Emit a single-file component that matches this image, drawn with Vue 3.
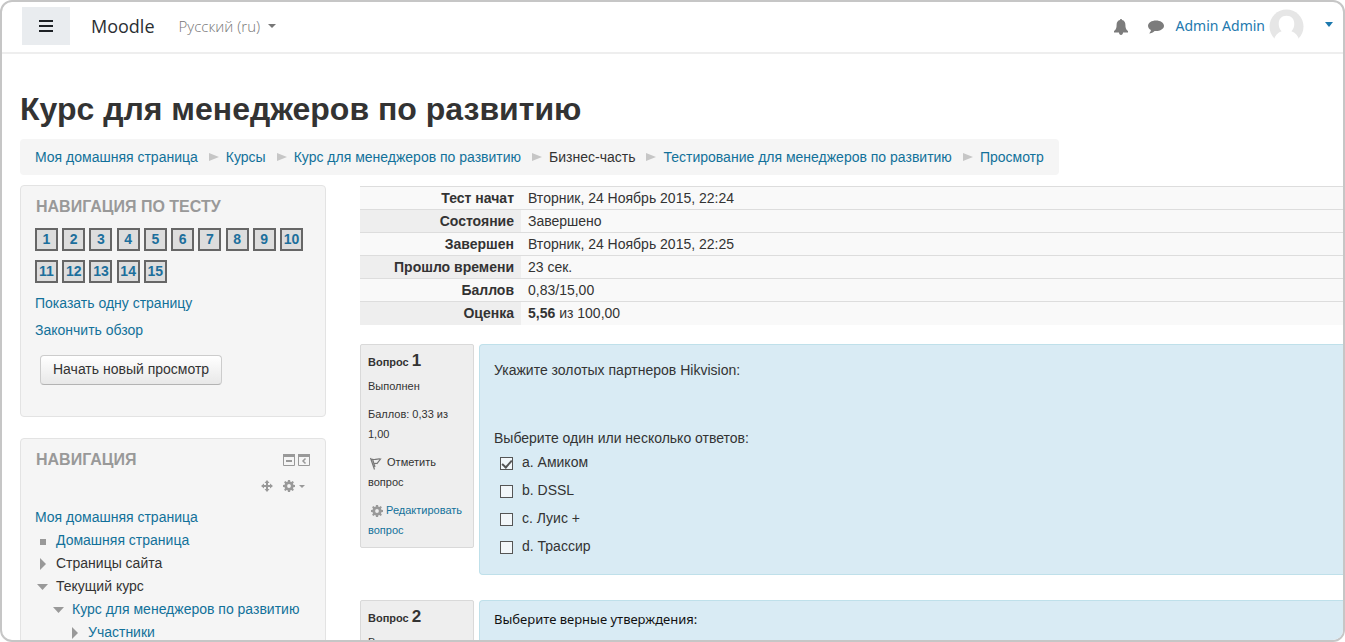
<script setup>
import { ref } from 'vue'

const crumbs = [
  { text: 'Моя домашняя страница', link: true },
  { text: 'Курсы', link: true },
  { text: 'Курс для менеджеров по развитию', link: true },
  { text: 'Бизнес-часть', link: false },
  { text: 'Тестирование для менеджеров по развитию', link: true },
  { text: 'Просмотр', link: true },
]

const summary = [
  { name: 'Тест начат', value: 'Вторник, 24 Ноябрь 2015, 22:24' },
  { name: 'Состояние', value: 'Завершено' },
  { name: 'Завершен', value: 'Вторник, 24 Ноябрь 2015, 22:25' },
  { name: 'Прошло времени', value: '23 сек.' },
  { name: 'Баллов', value: '0,83/15,00' },
  { name: 'Оценка', strong: '5,56', value: ' из 100,00' },
]

const tree = [
  { text: 'Домашняя страница', kind: 'leaf', level: 'l1', link: true },
  { text: 'Страницы сайта', kind: 'closed', level: 'l1', link: false },
  { text: 'Текущий курс', kind: 'open', level: 'l1', link: false },
  { text: 'Курс для менеджеров по развитию', kind: 'open', level: 'l2', link: true },
  { text: 'Участники', kind: 'closed', level: 'l3', link: true },
]

const answers = ref([
  { text: 'a. Амиком', checked: true },
  { text: 'b. DSSL', checked: false },
  { text: 'c. Луис +', checked: false },
  { text: 'd. Трассир', checked: false },
])

const gear =
  'M5.8 0h2.4l.4 1.9 1.1.5L11.300 1.300 12.700 2.700 11.600 4.300l.5 1.100 1.900.4v2.400l-1.900.4-.5 1.100 1.100 1.600-1.400 1.400-1.600-1.100-1.100.5-.4 1.900H5.800l-.4-1.900-1.100-.5-1.600 1.100-1.400-1.400 1.100-1.600-.5-1.100L0 8.200V5.800l1.900-.4.500-1.100L1.300 2.700l1.400-1.400 1.600 1.100 1.100-.5zM7 4.800a2.200 2.200 0 1 0 0 4.400 2.200 2.200 0 0 0 0-4.400z'
</script>

<template>
  <div class="frame">
    <header class="topbar">
      <button class="menu" type="button" aria-label="Меню">
        <svg width="14" height="12" viewBox="0 0 14 12"><path d="M0 1h14M0 6h14M0 11h14" stroke="#1d2125" stroke-width="2" /></svg>
      </button>
      <a class="brand" href="#">Moodle</a>
      <button class="lang" type="button">Русский (ru)
        <svg width="8" height="4" viewBox="0 0 8 4"><path d="M0 0h8L4 4z" fill="#777" /></svg>
      </button>
      <div class="user">
        <button class="plain bell" type="button" aria-label="Уведомления">
          <svg width="14" height="16" viewBox="0 0 14 16"><path d="M7 0c.6 0 1 .4 1 1 2.300.5 3.400 2.300 3.400 4.700 0 3.300.6 4.800 2.600 6.300v1.500H9C9 15 8.200 16 7 16s-2-1-2-2.500H0V12c2-1.500 2.600-3 2.600-6.300C2.600 3.300 3.700 1.500 6 1c0-.6.4-1 1-1z" fill="#7c7c7c" /></svg>
        </button>
        <button class="plain chat" type="button" aria-label="Сообщения">
          <svg width="16" height="14" viewBox="0 0 17 14"><path d="M8.500 0C13 0 17 2.300 17 5.700s-4 5.600-8.500 5.600l-1.500-.1C5.500 12.700 3.500 13.700 1.300 13.800c1-1 1.700-2.200 1.800-3.500C1.200 9.200 0 7.600 0 5.700 0 2.300 4 0 8.500 0z" fill="#7c7c7c" /></svg>
        </button>
        <a class="username" href="#">Admin Admin</a>
        <svg class="avatar" width="35" height="35" viewBox="0 0 36 36">
          <circle cx="18" cy="18" r="17.500" fill="#e6e6e6" />
          <path d="M18 7c5 0 8 3 8 8.500 0 3-1 5.500-3 7.500 4 1.500 7 4.500 8 9v4H5v-4c1-4.500 4-7.500 8-9-2-2-3-4.500-3-7.500C10 10 13 7 18 7z" fill="#fff" />
        </svg>
        <button class="plain caret" type="button" aria-label="Меню пользователя">
          <svg width="8" height="5" viewBox="0 0 8 5"><path d="M0 0h8L4 5z" fill="#1c79ae" /></svg>
        </button>
      </div>
    </header>

    <h1>Курс для менеджеров по развитию</h1>

    <nav class="crumbs" aria-label="Путь">
      <template v-for="(c, i) in crumbs" :key="c.text">
        <svg v-if="i" width="10" height="10" viewBox="0 0 10 10"><path d="M0 1l10 4-10 4z" fill="#c6c6c6" /></svg>
        <a v-if="c.link" href="#">{{ c.text }}</a>
        <span v-else>{{ c.text }}</span>
      </template>
    </nav>

    <div class="columns">
      <aside>
        <section class="block quiznav">
          <h2>Навигация по тесту</h2>
          <div class="pages">
            <a v-for="n in 15" :key="n" href="#">{{ n }}</a>
          </div>
          <a class="line" href="#">Показать одну страницу</a>
          <a class="line" href="#">Закончить обзор</a>
          <button class="restart" type="button">Начать новый просмотр</button>
        </section>

        <section class="block">
          <div class="blockhead">
            <h2>Навигация</h2>
            <button class="plain" type="button" aria-label="Свернуть">
              <svg width="12" height="12" viewBox="0 0 12 12"><path d="M.5 1h11v10.500H.5z" fill="none" stroke="#999" /><path d="M0 0h12v3H0zM3 6h6v2H3z" fill="#999" /></svg>
            </button>
            <button class="plain" type="button" aria-label="Скрыть в панель">
              <svg width="12" height="12" viewBox="0 0 12 12"><path d="M.5 1h11v10.500H.5z" fill="none" stroke="#999" /><path d="M0 0h12v3H0z" fill="#999" /><path d="M7.500 4.500L5 7l2.500 2.500" fill="none" stroke="#999" stroke-width="1.500" /></svg>
            </button>
          </div>
          <div class="tools">
            <button class="plain" type="button" aria-label="Переместить">
              <svg width="12" height="12" viewBox="0 0 12 12"><path d="M6 1v10M1 6h10" stroke="#999" stroke-width="2" /><path d="M6 0l2.500 3h-5zM6 12l2.500-3h-5zM0 6l3-2.500v5zM12 6L9 3.500v5z" fill="#999" /></svg>
            </button>
            <button class="plain actions" type="button" aria-label="Действия">
              <svg width="12" height="12" viewBox="0 0 14 14"><path :d="gear" fill="#999" fill-rule="evenodd" /></svg>
              <svg width="6" height="3" viewBox="0 0 6 3"><path d="M0 0h6L3 3z" fill="#999" /></svg>
            </button>
          </div>
          <ul class="tree">
            <li class="root"><a href="#">Моя домашняя страница</a></li>
            <li v-for="t in tree" :key="t.text" :class="t.level">
              <svg width="12" height="12" viewBox="0 0 12 12">
                <path v-if="t.kind === 'leaf'" d="M5 4h6v6H5z" fill="#999" />
                <path v-else-if="t.kind === 'closed'" d="M5 0l6 6-6 6z" fill="#999" />
                <path v-else d="M2 3h11L7.500 9z" fill="#999" />
              </svg>
              <a v-if="t.link" href="#">{{ t.text }}</a>
              <span v-else>{{ t.text }}</span>
            </li>
          </ul>
        </section>
      </aside>

      <main>
        <table class="summary">
          <tbody>
            <tr v-for="r in summary" :key="r.name">
              <th scope="row">{{ r.name }}</th>
              <td><b v-if="r.strong">{{ r.strong }}</b>{{ r.value }}</td>
            </tr>
          </tbody>
        </table>

        <section class="question">
          <div class="info">
            <h3>Вопрос <span>1</span></h3>
            <p>Выполнен</p>
            <p>Баллов: 0,33 из 1,00</p>
            <p>
              <svg class="flag" width="13" height="13" viewBox="0 0 13 13"><path d="M1.500 1L5.500 12.500M3.500 2l2.500 8M2 2c3 1.500 5-.5 9.500 0L8 6.500c-1.500-.5-2.500 0-3.500.5" fill="none" stroke="#777" stroke-width="1.200" /></svg>
              Отметить вопрос
            </p>
            <p>
              <a href="#"><svg class="cog" width="12" height="12" viewBox="0 0 14 14"><path :d="gear" fill="#999" fill-rule="evenodd" /></svg>
                Редактировать вопрос</a>
            </p>
          </div>
          <div class="content">
            <p class="text">Укажите золотых партнеров Hikvision:</p>
            <fieldset>
              <legend>Выберите один или несколько ответов:</legend>
              <label v-for="a in answers" :key="a.text">
                <input v-model="a.checked" type="checkbox" />
                <span>{{ a.text }}</span>
              </label>
            </fieldset>
          </div>
        </section>

        <section class="question">
          <div class="info">
            <h3>Вопрос <span>2</span></h3>
            <p>Выполнен</p>
          </div>
          <div class="content second">
            <p>Выберите верные утверждения:</p>
          </div>
        </section>
      </main>
    </div>
  </div>
</template>

<style>
body { margin: 0; background: #fff; }
</style>

<style scoped>
* { box-sizing: border-box; }
.frame {
  height: 100vh;
  overflow: hidden;
  border: 2px solid #c6c6c6;
  border-radius: 12px;
  background: #fff;
  color: #333;
  font: 14px/20px "Liberation Sans", Arial, sans-serif;
}
h1, h2, h3, p, ul { margin: 0; padding: 0; }
a { color: #12719a; text-decoration: none; }
button { font: inherit; cursor: pointer; }
svg { flex: none; }
.plain { display: flex; align-items: center; padding: 0; border: 0; background: none; }

.topbar {
  display: flex;
  align-items: center;
  height: 52px;
  padding: 0 10px 2px 20px;
  border-bottom: 2px solid #eee;
  font-family: "Open Sans", "Noto Sans", sans-serif;
}
.menu {
  display: flex;
  align-items: center;
  justify-content: center;
  width: 48px;
  height: 38px;
  padding: 0;
  border: 0;
  background: #e9ecef;
}
.brand { margin-left: 21px; color: #2b2f33; font-size: 18px; }
.lang {
  display: flex;
  align-items: center;
  gap: 8px;
  margin-left: 24px;
  padding: 0;
  border: 0;
  background: none;
  color: #777;
  font-size: 15px;
  font-weight: 300;
}
.user { display: flex; align-items: center; margin-left: auto; }
.bell, .chat { padding-top: 2px; }
.chat { margin-left: 20px; }
.username { margin: 0 4px 0 12px; color: #2279ae; font-family: "Noto Sans", sans-serif; font-size: 14px; }
.caret { margin-left: 21px; padding-bottom: 4px; }

h1 { margin: 35px 18px 0; font-size: 32px; line-height: 40px; }
.crumbs {
  display: flex;
  align-items: center;
  width: fit-content;
  height: 36px;
  margin: 10px 18px;
  padding: 0 15px;
  border-radius: 4px;
  background: #f5f5f5;
  white-space: nowrap;
}
.crumbs svg { margin: 0 7px 0 11px; }

.columns {
  display: grid;
  grid-template-columns: 306px minmax(0, 1fr);
  gap: 34px;
  padding-left: 18px;
}
.block {
  margin-bottom: 21px;
  padding: 10px 14px;
  border: 1px solid #e3e3e3;
  border-radius: 4px;
  background: #f5f5f5;
}
.quiznav { height: 232px; }
h2 { padding-left: 1px; color: #999; font-size: 16px; line-height: 22px; text-transform: uppercase; }
.pages {
  display: grid;
  grid-template-columns: repeat(10, 23px);
  justify-content: space-between;
  row-gap: 9px;
  width: 268px;
  margin: 10px 0;
}
.pages a {
  height: 23px;
  border: 2px solid #666;
  background: #ddd;
  color: #1c6f9c;
  font-weight: 700;
  line-height: 19px;
  text-align: center;
}
.line { display: block; margin-bottom: 7px; }
.restart {
  height: 30px;
  margin: 8px 5px;
  padding: 0 12px 2px;
  border: 1px solid #ccc;
  border-bottom-color: #b3b3b3;
  border-radius: 4px;
  background: linear-gradient(#fff, #e8e8e8);
  color: #333;
}
.blockhead { display: flex; align-items: center; gap: 3px; padding-right: 1px; }
.blockhead h2 { flex: 1; }
.tools { display: flex; justify-content: flex-end; gap: 10px; padding: 9px 6px 0 0; }
.actions { gap: 4px; }
.tree { margin-top: 14px; list-style: none; line-height: 23px; white-space: nowrap; }
.tree li { display: flex; align-items: center; gap: 9px; }
.tree svg { overflow: visible; }
.l2 { padding-left: 16px; }
.l3 { padding-left: 32px; }

.summary { width: 100%; margin-top: 1px; border-collapse: collapse; }
.summary th, .summary td {
  height: 23px;
  padding: 1px 7px;
  border-top: 1px solid #ddd;
  background: #f9f9f9;
  text-align: left;
}
.summary th { width: 161px; text-align: right; }
.summary tr:nth-child(even) th { background: #eee; }

.question {
  display: grid;
  grid-template-columns: 114px minmax(0, 1fr);
  align-items: start;
  gap: 5px;
  margin-top: 19px;
}
.question + .question { margin-top: 25px; }
.info {
  padding: 6px 7px 7px;
  border: 1px solid #d9d9d9;
  border-radius: 2px;
  background: #eee;
  font-size: 11px;
}
.info h3 { margin-bottom: 4px; font-size: 11px; line-height: 20px; }
.info h3 span { font-size: 17px; }
.info p + p { margin-top: 8px; }
.flag { margin: 0 2px 0 1px; vertical-align: -4px; }
.cog { margin-left: 3px; vertical-align: -3px; }
.content {
  padding: 15px 14px 14px;
  border: 1px solid #bfe0ea;
  border-right: 0;
  border-radius: 4px 0 0 4px;
  background: #d9ebf4;
}
.content .text { margin-bottom: 48px; }
fieldset { margin: 0; padding: 0; border: 0; }
legend { padding: 0; }
label { display: flex; align-items: center; gap: 9px; height: 20px; margin: 4px 0 0 6px; }
label + label { margin-top: 8px; }
label:last-child { margin-bottom: 4px; }
input {
  display: grid;
  place-items: center;
  width: 13px;
  height: 13px;
  margin: 3px 0 0;
  border: 1px solid #555;
  background: #f2f7fa;
  appearance: none;
}
input:checked::before {
  content: "";
  width: 4px;
  height: 8px;
  margin-bottom: 2px;
  border: solid #555;
  border-width: 0 2px 2px 0;
  transform: rotate(42deg);
}
.second { min-height: 200px; padding-top: 8px; color: #111; font-family: "Noto Sans", sans-serif; font-size: 13px; }
</style>
